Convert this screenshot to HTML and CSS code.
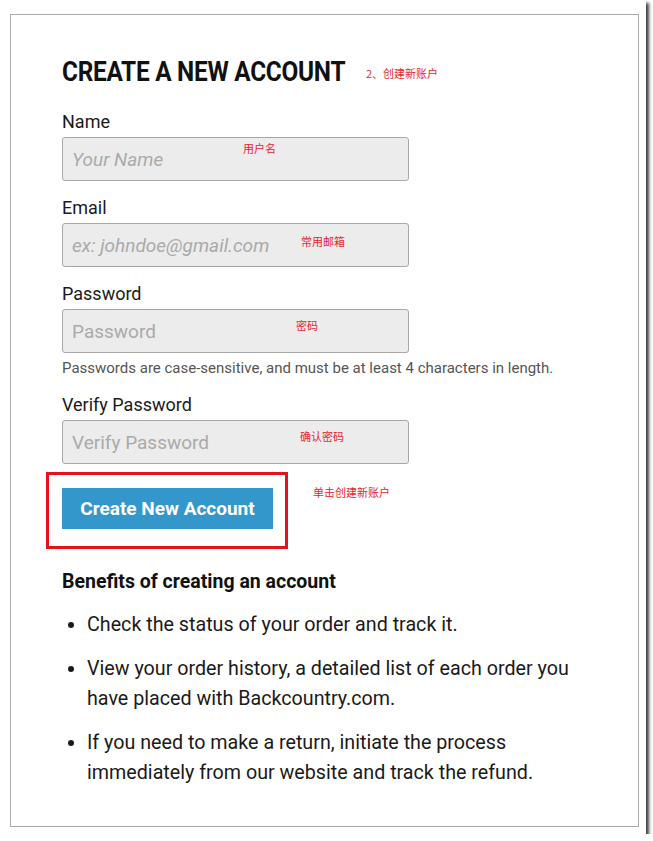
FILE: index.html
```html
<!DOCTYPE html>
<html lang="en">
<head>
  <meta charset="UTF-8">
  <meta name="viewport" content="width=device-width, initial-scale=1.0">
  <title>Create a New Account</title>
  <link rel="stylesheet" href="styles.css">
</head>
<body>
  <div class="sheet">
    <div class="panel">
      <h1 class="title"><span>CREATE A NEW ACCOUNT</span></h1>

      <form class="signup">
        <div class="field">
          <label for="name">Name</label>
          <input id="name" class="italic" type="text" placeholder="Your Name">
        </div>
        <div class="field">
          <label for="email">Email</label>
          <input id="email" class="italic" type="text" placeholder="ex: johndoe@gmail.com">
        </div>
        <div class="field">
          <label for="password">Password</label>
          <input id="password" type="text" placeholder="Password">
          <p class="hint">Passwords are case-sensitive, and must be at least 4 characters in length.</p>
        </div>
        <div class="field">
          <label for="verify">Verify Password</label>
          <input id="verify" type="text" placeholder="Verify Password">
        </div>
        <div class="submit">
          <button type="button">Create New Account</button>
          <span class="highlight"></span>
        </div>
      </form>

      <h2 class="benefits">Benefits of creating an account</h2>
      <ul class="perks">
        <li>Check the status of your order and track it.</li>
        <li>View your order history, a detailed list of each order you have placed with Backcountry.com.</li>
        <li>If you need to make a return, initiate the process immediately from our website and track the refund.</li>
      </ul>

      <!-- annotations -->
      <span class="note note-title">2、创建新账户</span>
      <span class="note note-name">用户名</span>
      <span class="note note-email">常用邮箱</span>
      <span class="note note-pass">密码</span>
      <span class="note note-verify">确认密码</span>
      <span class="note note-submit">单击创建新账户</span>
    </div>
  </div>
</body>
</html>
```

FILE: styles.css
```css
body {
  margin: 0;
  background-color: #fff;
  font-family: Roboto, "Liberation Sans", sans-serif;
  color: #1a1a1a;
}
.sheet {
  width: 646px;
  height: 834px;
  background-color: #fff;
  box-shadow: 3px 3px 3px rgba(0, 0, 0, 0.75);
  overflow: hidden;
}
.panel {
  position: relative;
  box-sizing: border-box;
  width: 629px;
  height: 813px;
  margin: 14px 0 0 10px;
  padding: 41px 0 0 51px;
  border: 1px solid #a9a9a9;
}
.title {
  margin: 0 0 23px;
  font-family: Roboto, sans-serif;
  font-size: 28px;
  line-height: 32px;
  font-weight: bold;
  letter-spacing: -0.3px;
  color: #111;
}
/* condensed look of the original heading face */
.title span {
  display: inline-block;
  transform: scaleX(0.87);
  transform-origin: left center;
  white-space: nowrap;
}
.field {
  margin-bottom: 16px;
}
.field label {
  display: block;
  margin-bottom: 4px;
  font-size: 18px;
  line-height: 22px;
}
.field input {
  display: block;
  box-sizing: border-box;
  width: 347px;
  height: 44px;
  margin: 0;
  padding: 0 9px;
  border: 1px solid #a8a8a8;
  border-radius: 3px;
  background-color: #ececec;
  font-family: Roboto, sans-serif;
  font-size: 19px;
  color: #333;
}
.field input::placeholder {
  color: #aaa;
}
.field input.italic {
  font-style: italic;
}
.hint {
  margin: 5px 0 0;
  font-size: 15px;
  line-height: 20px;
  color: #555;
}
.submit {
  position: relative;
  width: 211px;
  margin-top: 24px;
}
.submit button {
  display: block;
  height: 41px;
  width: 211px;
  padding: 0;
  border: none;
  background-color: #3497cc;
  font-family: Roboto, sans-serif;
  font-size: 19px;
  font-weight: bold;
  color: #fff;
}
.highlight {
  position: absolute;
  left: -16px;
  top: -16px;
  width: 236px;
  height: 71px;
  border: 3px solid #e3131c;
}
.benefits {
  margin: 42px 0 0;
  font-size: 19.5px;
  line-height: 22px;
  font-weight: bold;
  color: #111;
}
.perks {
  margin: 17px 0 0;
  padding: 0 0 0 25px;
  width: 510px;
  font-size: 19.7px;
  line-height: 30px;
}
.perks li {
  margin-bottom: 14px;
}
.note {
  position: absolute;
  font-family: "Noto Sans CJK SC", sans-serif;
  font-size: 11px;
  line-height: 14px;
  color: #e6262e;
  white-space: nowrap;
}
.note-title { left: 355px; top: 51px; }
.note-name { left: 232px; top: 126px; }
.note-email { left: 290px; top: 219px; }
.note-pass { left: 285px; top: 303px; }
.note-verify { left: 289px; top: 414px; }
.note-submit { left: 302px; top: 470px; }
```
